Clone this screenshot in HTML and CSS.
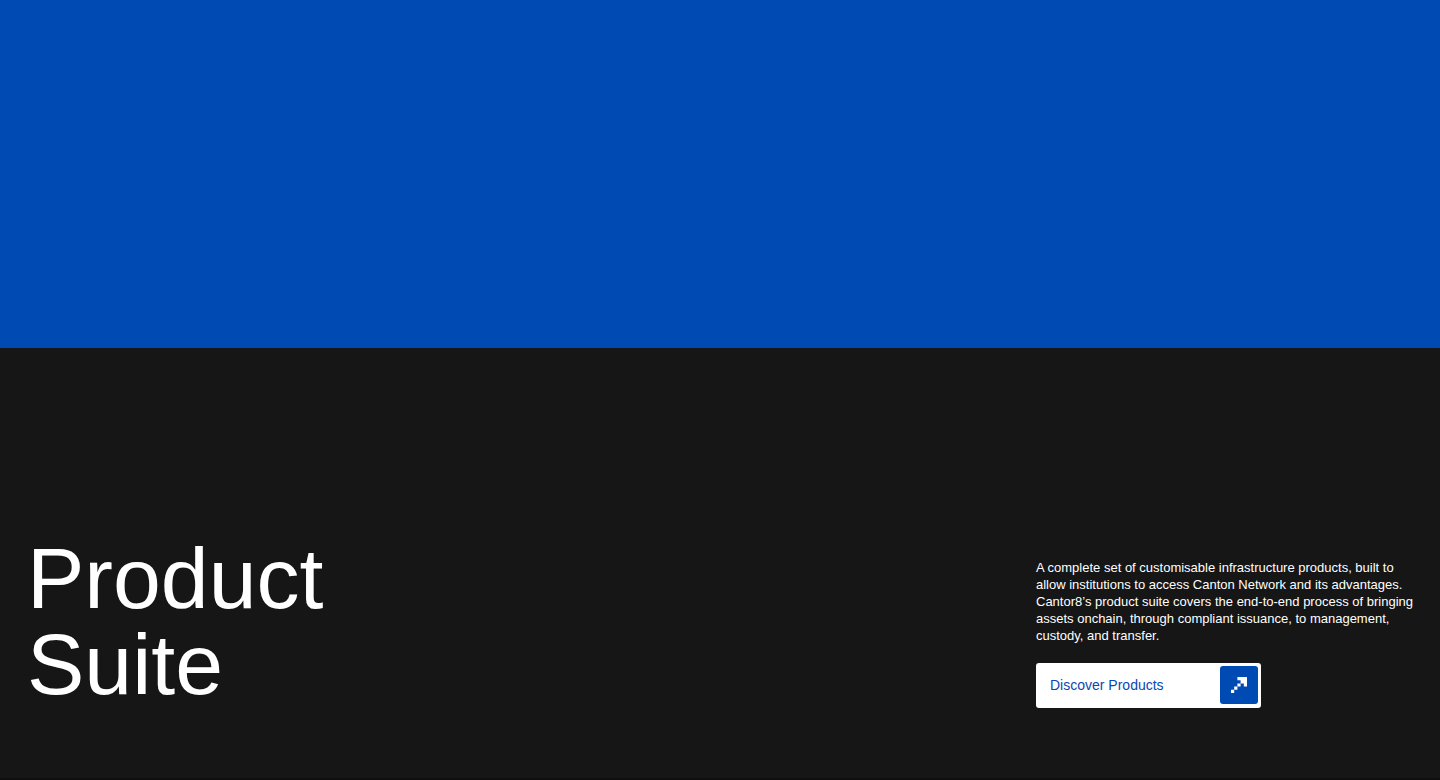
FILE: index.html
```html
<!DOCTYPE html>
<html lang="en">
<head>
<meta charset="utf-8">
<meta name="viewport" content="width=device-width, initial-scale=1">
<title>Product Suite</title>
<link rel="stylesheet" href="styles.css">
</head>
<body>
<main class="page">
  <section class="hero" aria-hidden="true"></section>
  <section class="suite">
    <h1 class="suite-title">Product<br>Suite</h1>
    <div class="suite-intro">
      <p class="suite-text">A complete set of customisable infrastructure products, built to<br>allow institutions to access Canton Network and its advantages.<br>Cantor8’s product suite covers the end-to-end process of bringing<br>assets onchain, through compliant issuance, to management,<br>custody, and transfer.</p>
      <a class="button" href="#products">
        <span class="button-label">Discover Products</span>
        <span class="button-icon">
          <svg class="arrow" viewBox="0 0 5 5" aria-hidden="true"><path d="M2 0H5V3H4V2H3V1H2ZM2 2H3V3H2ZM1 3H2V4H1ZM0 4H1V5H0Z"/></svg>
        </span>
      </a>
    </div>
  </section>
</main>
</body>
</html>
```
FILE: styles.css
```css
* {
  box-sizing: border-box;
}

body {
  margin: 0;
  background: #161616;
  color: #fff;
  font-family: "Liberation Sans", Arial, sans-serif;
}

.page {
  display: flex;
  flex-direction: column;
  min-height: 100vh;
}

.hero {
  flex: 1;
  background: #004ab3;
}

.suite {
  display: flex;
  justify-content: space-between;
  align-items: flex-end;
  gap: 32px;
  padding: 187px 28px 70px 27px;
  border-bottom: 2px solid #100f10;
}

.suite-title {
  margin: 0 0 1px;
  font-size: 86px;
  font-weight: 400;
  line-height: 86px;
}

.suite-intro {
  width: 376px;
}

.suite-text {
  margin: 0 0 19px;
  font-size: 13px;
  line-height: 17px;
  white-space: nowrap;
}

.button {
  display: flex;
  align-items: center;
  justify-content: space-between;
  width: 225px;
  padding: 3px 3px 4px 14px;
  border-radius: 3px;
  background: #fff;
  color: #0a46b4;
  font-size: 14px;
  text-decoration: none;
}

.button-icon {
  display: flex;
  align-items: center;
  justify-content: center;
  width: 38px;
  height: 38px;
  border-radius: 3px;
  background: #004ab3;
}

.arrow {
  width: 16px;
  height: 16px;
  fill: #fff;
}
```
